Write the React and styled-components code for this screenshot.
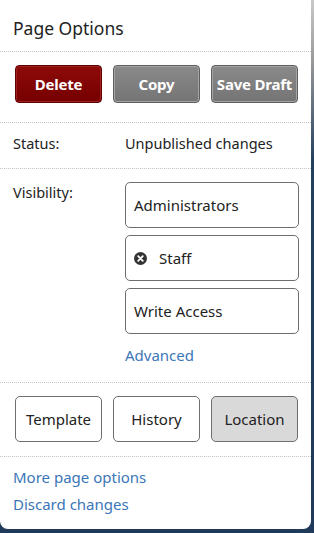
import React from "react";
import styled, { createGlobalStyle } from "styled-components";

const Global = createGlobalStyle`
  html, body {
    margin: 0;
    padding: 0;
  }
  body {
    width: 314px;
    height: 533px;
    overflow: hidden;
    background: linear-gradient(#c9c9c9 0px, #9a9a9a 60px, #24405f 160px, #1f3a5a 533px);
    font-family: "Noto Sans", "Open Sans", sans-serif;
    color: #222;
  }
`;

const Panel = styled.div`
  width: 311px;
  height: 529px;
  background: #fff;
  border-radius: 0 0 8px 8px;
  display: flex;
  flex-direction: column;
`;

const Section = styled.div`
  padding: ${(p) => p.$pad || "0 13px"};
  border-bottom: ${(p) => (p.$last ? "none" : "1px dotted #c4c4c4")};
`;

const Title = styled.h1`
  margin: 0;
  font-size: 17.5px;
  font-weight: 400;
  line-height: 20px;
  color: #222;
`;

const ButtonRow = styled.div`
  display: grid;
  grid-template-columns: repeat(3, 87px);
  column-gap: 11px;
  padding-left: 2px;
`;

const tones = {
  danger: { bg: "linear-gradient(#8e0a0a, #760000)", border: "#5c0000", inner: "#a02020", color: "#fff" },
  muted: { bg: "linear-gradient(#8a8a8a, #747474)", border: "#5f5f5f", inner: "#a3a3a3", color: "#fff" },
};

const ActionButton = styled.button`
  height: 38px;
  border-radius: 4px;
  border: 1px solid ${(p) => tones[p.$tone].border};
  box-shadow: inset 0 0 0 1px ${(p) => tones[p.$tone].inner};
  background: ${(p) => tones[p.$tone].bg};
  color: ${(p) => tones[p.$tone].color};
  font-family: inherit;
  font-size: 15px;
  font-weight: 700;
  padding: 0;
  white-space: nowrap;
  letter-spacing: -0.2px;
`;

const ToggleButton = styled.button`
  height: 46px;
  border-radius: 5px;
  border: 1px solid #6e6e6e;
  background: ${(p) => (p.$active ? "#d9d9d9" : "#fff")};
  color: #222;
  font-family: inherit;
  font-size: 15px;
  padding: 0;
`;

const InfoRow = styled.div`
  display: grid;
  grid-template-columns: 112px 1fr;
  align-items: start;
  font-size: 14.5px;
`;

const Label = styled.span`
  color: #222;
  line-height: 20px;
`;

const ChoiceList = styled.div`
  display: flex;
  flex-direction: column;
  gap: 7px;
`;

const Choice = styled.div`
  height: 46px;
  box-sizing: border-box;
  border: 1px solid #6e6e6e;
  border-radius: 5px;
  display: flex;
  align-items: center;
  gap: 12px;
  padding: 0 8px;
  font-size: 15px;
  color: #222;
`;

const Link = styled.a`
  color: #3b76b8;
  text-decoration: none;
  font-size: 15px;
  line-height: 20px;
  display: block;
  margin-top: ${(p) => p.$top || "0"};
`;

const LinkList = styled.div`
  display: flex;
  flex-direction: column;
  gap: 7px;
`;

const RemoveIcon = () => (
  <svg width="13" height="13" viewBox="0 0 13 13">
    <circle cx="6.5" cy="6.5" r="6.5" fill="#333" />
    <path d="M4.2 4.2 L8.8 8.8 M8.8 4.2 L4.2 8.8" stroke="#fff" strokeWidth="1.8" strokeLinecap="round" />
  </svg>
);

export default function App() {
  return (
    <>
      <Global />
      <Panel>
        <Section $pad="18px 13px 13px">
          <Title>Page Options</Title>
        </Section>
        <Section $pad="13px 13px 19px">
          <ButtonRow>
            <ActionButton $tone="danger">Delete</ActionButton>
            <ActionButton $tone="muted">Copy</ActionButton>
            <ActionButton $tone="muted">Save Draft</ActionButton>
          </ButtonRow>
        </Section>
        <Section $pad="10px 13px 15px">
          <InfoRow>
            <Label>Status:</Label>
            <Label>Unpublished changes</Label>
          </InfoRow>
        </Section>
        <Section $pad="13px 12px 17px 13px">
          <InfoRow>
            <Label>Visibility:</Label>
            <div>
              <ChoiceList>
                <Choice>Administrators</Choice>
                <Choice>
                  <RemoveIcon />
                  Staff
                </Choice>
                <Choice>Write Access</Choice>
              </ChoiceList>
              <Link href="#" $top="11px">Advanced</Link>
            </div>
          </InfoRow>
        </Section>
        <Section $pad="13px 13px 14px">
          <ButtonRow>
            <ToggleButton>Template</ToggleButton>
            <ToggleButton>History</ToggleButton>
            <ToggleButton $active>Location</ToggleButton>
          </ButtonRow>
        </Section>
        <Section $pad="10px 13px" $last>
          <LinkList>
            <Link href="#">More page options</Link>
            <Link href="#">Discard changes</Link>
          </LinkList>
        </Section>
      </Panel>
    </>
  );
}
